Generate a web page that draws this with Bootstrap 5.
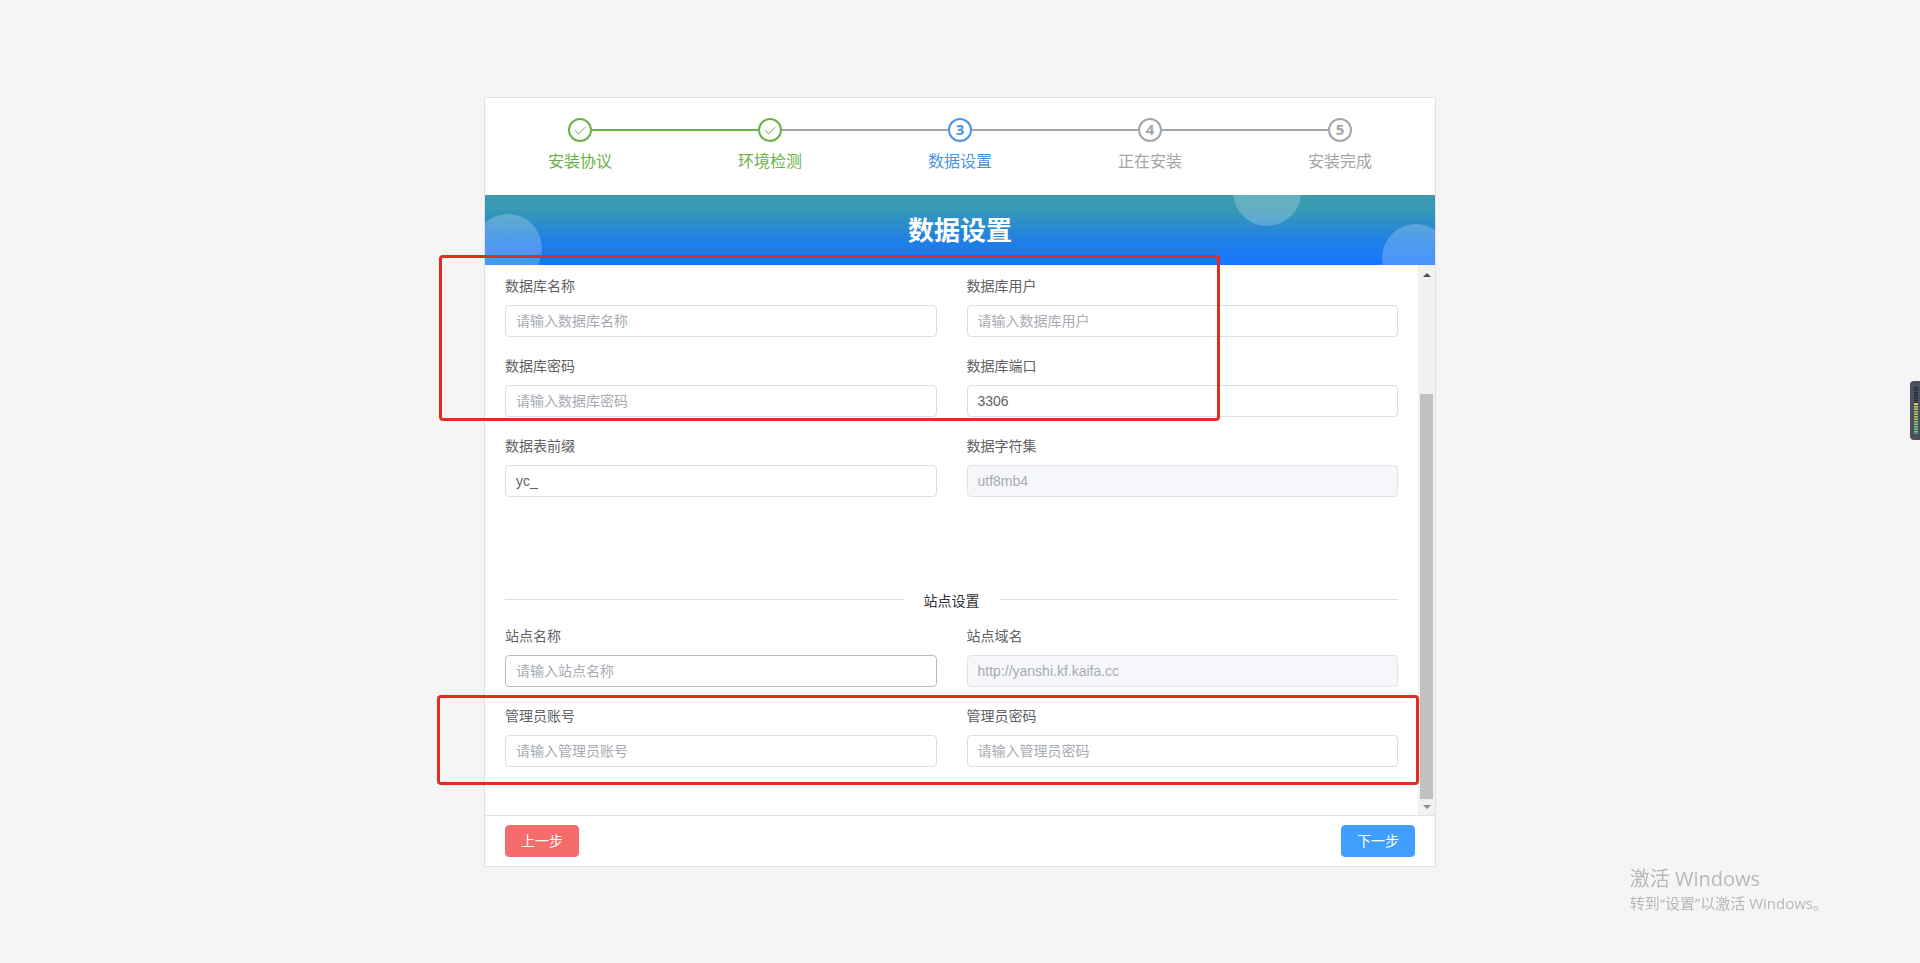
<!DOCTYPE html>
<html lang="zh-CN">
<head>
<meta charset="utf-8">
<meta name="viewport" content="width=device-width, initial-scale=1">
<title>数据设置</title>
<link href="https://cdn.jsdelivr.net/npm/bootstrap@5.3.0/dist/css/bootstrap.min.css" rel="stylesheet">
<style>
  body { background: #f5f5f5; color: #303133; font-family: "Liberation Sans", "Noto Sans CJK SC", sans-serif; font-size: 14px; font-weight: 400; }
  .install-box { max-width: 952px; background: #fff; border: 1px solid #e0e1e3; }

  /* step bar */
  .step-list { padding: 20px 0 13px; }
  .step-item { position: relative; color: #a3a5a9; font-size: 16px; line-height: 40px; }
  .step-item:not(:last-child)::after { content: ""; position: absolute; left: calc(50% + 12px); right: calc(-50% + 12px); top: 11px; height: 2px; background: #a3a5a9; }
  .step-done { color: #69b345; }
  .step-done.step-linked::after { background: #69b345 !important; }
  .step-now { color: #4a96e3; }
  .step-mark { width: 24px; height: 24px; border: 2px solid currentColor; font: 700 15px/18px "Open Sans", sans-serif; }

  /* banner */
  .banner { height: 70px; background: linear-gradient(180deg, #3a9bad 0%, #389ab5 20%, #1f7fe6 65%, #1677ff 100%); }
  .banner h1 { padding-top: 2px; font-size: 26px; line-height: 38px; font-weight: 700; }
  .bubble { position: absolute; width: 68px; height: 68px; background: rgba(255, 255, 255, .22); }
  .bubble-a { left: -11px; top: 19px; }
  .bubble-b { right: 134px; top: -37px; }
  .bubble-c { right: -15px; top: 29px; }

  /* form */
  .form-pane { padding: 2px 20px 38px; min-width: 0; }
  .field-row { --bs-gutter-x: 30px; }
  .field-row > div { margin-bottom: 10px; }
  .field-row label { display: block; line-height: 38px; color: #606266; }
  .field-row .form-control { height: 32px; padding: 0 10px; font-size: 14px; color: #606266; border-color: #dcdee2; border-radius: 4px; }
  .field-row .form-control::placeholder { color: #a8abb2; }
  .field-row .form-control:disabled { background: #f5f7fa; color: #a8abb2; border-color: #e1e4ea; }
  .field-row .form-control.field-hover { border-color: #b9bbc0; }
  .section-title { margin-top: 82px; height: 24px; line-height: 24px; margin-bottom: 4px; }
  .section-title::before, .section-title::after { content: ""; flex: 1; height: 1px; margin-top: 10px; align-self: flex-start; background: #dcdfe3; }

  /* scroll track */
  .track { width: 17px; background: #f1f1f1; padding: 8px 0 6px; }
  .track-thumb { width: 13px; margin: 117px 0 6px; background: #c1c1c1; }

  .foot-bar { border-top: 1px solid #e0e1e3; padding: 9px 20px; }
  .foot-bar .btn { width: 74px; height: 32px; padding: 0; font-size: 14px; line-height: 30px; color: #fff; border-radius: 4px; }
  .btn-prev { background: #f56c6c; border-color: #f56c6c; }
  .btn-next { background: #409eff; border-color: #409eff; }

  /* highlight frames over the form */
  .frame { position: absolute; border: 3px solid #e02d20; border-radius: 4px; pointer-events: none; }
  .frame-db { left: -46px; right: 215px; top: 157px; height: 166px; }
  .frame-admin { left: -48px; right: 16px; top: 597px; height: 90px; }

  .os-note { right: 92px; bottom: 49px; color: #b8b8b8; font-family: "Open Sans", "Noto Sans CJK SC", sans-serif; font-size: 15px; line-height: 22px; }
  .os-note strong { display: block; font-size: 20px; line-height: 26px; font-weight: 400; }
  .meter { right: 0; top: 381px; line-height: 0; }
</style>
</head>
<body>
<div class="min-vh-100 d-flex align-items-center justify-content-center">
  <main class="install-box position-relative w-100">
    <ol class="step-list list-unstyled d-flex text-center mb-0">
      <li class="step-item step-done step-linked flex-fill w-100"><span class="step-mark rounded-circle d-flex align-items-center justify-content-center mx-auto"><svg width="14" height="14" viewBox="0 0 14 14" fill="none" stroke="currentColor" aria-hidden="true"><path d="M2 7.2 5.5 11 12.3 4.2"/></svg></span>安装协议</li>
      <li class="step-item step-done flex-fill w-100"><span class="step-mark rounded-circle d-flex align-items-center justify-content-center mx-auto"><svg width="14" height="14" viewBox="0 0 14 14" fill="none" stroke="currentColor" aria-hidden="true"><path d="M2 7.2 5.5 11 12.3 4.2"/></svg></span>环境检测</li>
      <li class="step-item step-now flex-fill w-100" aria-current="step"><span class="step-mark rounded-circle d-block mx-auto">3</span>数据设置</li>
      <li class="step-item flex-fill w-100"><span class="step-mark rounded-circle d-block mx-auto">4</span>正在安装</li>
      <li class="step-item flex-fill w-100"><span class="step-mark rounded-circle d-block mx-auto">5</span>安装完成</li>
    </ol>

    <header class="banner position-relative overflow-hidden d-flex align-items-center justify-content-center text-white">
      <span class="bubble bubble-a rounded-circle"></span>
      <span class="bubble bubble-b rounded-circle"></span>
      <span class="bubble bubble-c rounded-circle"></span>
      <h1 class="m-0">数据设置</h1>
    </header>

    <form>
      <div class="d-flex">
        <div class="form-pane flex-grow-1">
          <div class="row field-row">
            <div class="col-6"><label for="dbName">数据库名称</label><input class="form-control" id="dbName" type="text" placeholder="请输入数据库名称"></div>
            <div class="col-6"><label for="dbUser">数据库用户</label><input class="form-control" id="dbUser" type="text" placeholder="请输入数据库用户"></div>
            <div class="col-6"><label for="dbPass">数据库密码</label><input class="form-control" id="dbPass" type="text" placeholder="请输入数据库密码"></div>
            <div class="col-6"><label for="dbPort">数据库端口</label><input class="form-control" id="dbPort" type="text" value="3306"></div>
            <div class="col-6"><label for="dbPrefix">数据表前缀</label><input class="form-control" id="dbPrefix" type="text" value="yc_"></div>
            <div class="col-6"><label for="dbCharset">数据字符集</label><input class="form-control" id="dbCharset" type="text" value="utf8mb4" disabled></div>
          </div>
          <div class="section-title d-flex"><span class="px-3 mx-1">站点设置</span></div>
          <div class="row field-row">
            <div class="col-6"><label for="siteName">站点名称</label><input class="form-control field-hover" id="siteName" type="text" placeholder="请输入站点名称"></div>
            <div class="col-6"><label for="siteHost">站点域名</label><input class="form-control" id="siteHost" type="text" value="http://yanshi.kf.kaifa.cc" disabled></div>
            <div class="col-6"><label for="adminName">管理员账号</label><input class="form-control" id="adminName" type="text" placeholder="请输入管理员账号"></div>
            <div class="col-6"><label for="adminPass">管理员密码</label><input class="form-control" id="adminPass" type="text" placeholder="请输入管理员密码"></div>
          </div>
        </div>
        <div class="track d-flex flex-column align-items-center flex-shrink-0" aria-hidden="true">
          <svg width="8" height="4" viewBox="0 0 8 4" fill="#505050"><path d="M0 4 4 0l4 4z"/></svg>
          <span class="track-thumb flex-grow-1"></span>
          <svg width="8" height="4" viewBox="0 0 8 4" fill="#8a8a8a"><path d="M0 0h8L4 4z"/></svg>
        </div>
      </div>
      <div class="foot-bar d-flex justify-content-between">
        <button class="btn btn-prev" type="button">上一步</button>
        <button class="btn btn-next" type="button">下一步</button>
      </div>
    </form>

    <div class="frame frame-db"></div>
    <div class="frame frame-admin"></div>
  </main>
</div>

<aside class="os-note position-fixed text-nowrap"><strong>激活 Windows</strong>转到“设置”以激活 Windows。</aside>

<div class="meter position-fixed" aria-hidden="true">
  <svg width="10" height="59" viewBox="0 0 10 59">
    <defs><linearGradient id="lv" x1="0" y1="0" x2="0" y2="1"><stop offset="0" stop-color="#d8cf5c"/><stop offset=".5" stop-color="#a9c96a"/><stop offset="1" stop-color="#5fd0a4"/></linearGradient></defs>
    <path d="M10 0H4Q0 0 0 4v51q0 4 4 4h6z" fill="#4a505c"/>
    <path d="M6 6v16" stroke="#262a33" stroke-width="4" stroke-dasharray="1.5 1"/>
    <rect x="4" y="22" width="4" height="31" fill="url(#lv)"/>
    <path d="M6 24v29" stroke="#4a505c" stroke-width="4" stroke-dasharray="1 1.5"/>
  </svg>
</div>
<script src="https://cdn.jsdelivr.net/npm/bootstrap@5.3.0/dist/js/bootstrap.bundle.min.js"></script>
</body>
</html>
